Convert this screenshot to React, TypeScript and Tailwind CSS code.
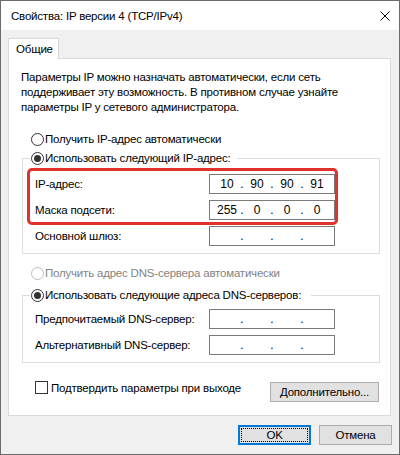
import React from "react";

function Radio({ checked = false, disabled = false }: { checked?: boolean; disabled?: boolean }) {
  return (
    <span
      className={
        "w-[13px] h-[13px] rounded-full border bg-white flex items-center justify-center shrink-0 " +
        (disabled ? "border-[#bcbcbc]" : "border-[#333333]")
      }
    >
      {checked ? <span className="w-[7px] h-[7px] rounded-full bg-[#333333]" /> : null}
    </span>
  );
}

function IpBox({ values }: { values?: string[] }) {
  const v = values ?? ["", "", "", ""];
  return (
    <div className="w-[126px] h-[20px] border border-[#7a7a7a] bg-white flex items-center pl-[5px] leading-[18px] tracking-normal text-[12px]">
      {v.map((x, i) => (
        <React.Fragment key={i}>
          <span className="w-[24px] text-center">{x}</span>
          {i < 3 ? <span className="w-[6px] text-center">.</span> : null}
        </React.Fragment>
      ))}
    </div>
  );
}

function Row({ label, values }: { label: string; values?: string[] }) {
  return (
    <div className="flex items-center h-[20px]">
      <span className="w-[174px] leading-[16px] whitespace-nowrap">{label}</span>
      <IpBox values={values} />
    </div>
  );
}

export default function App() {
  return (
    <div className="w-[400px] h-[455px] flex flex-col bg-[#f0f0f0] border border-[#6b6b6b] text-[11.5px] tracking-[-0.2px] text-black font-['Liberation_Sans',Arial,sans-serif]">
      <div className="h-[29px] bg-white flex items-center pl-[10px] shrink-0">
        <span className="leading-[16px]">Свойства: IP версии 4 (TCP/IPv4)</span>
        <svg className="ml-auto mr-[9px]" width="10" height="10" viewBox="0 0 10 10">
          <path d="M0.5 0.5 L9.5 9.5 M9.5 0.5 L0.5 9.5" stroke="#000" strokeWidth="1" fill="none" />
        </svg>
      </div>
      <div className="flex-1 flex flex-col pl-[7px] pr-[8px]">
        <div className="mt-[8px] w-[51px] h-[21px] border border-b-0 border-[#d9d9d9] bg-white -mb-px relative z-10 pl-[7px] flex items-center leading-[16px]">
          Общие
        </div>
        <div className="h-[358px] border border-[#d9d9d9] bg-white pl-[12px] pr-[11px] flex flex-col">
          <p className="mt-[11px] leading-[15px] whitespace-nowrap">
            Параметры IP можно назначать автоматически, если сеть
            <br />
            поддерживает эту возможность. В противном случае узнайте
            <br />
            параметры IP у сетевого администратора.
          </p>
          <label className="mt-[16px] ml-[10px] h-[16px] flex items-center gap-[1px] leading-[16px]">
            <Radio />
            <span>Получить IP-адрес автоматически</span>
          </label>
          <fieldset className="mt-[3px] ml-[1px] w-[358px] border border-[#dcdcdc] px-[4px] pb-[7px]">
            <legend className="ml-[3px] pl-[1px] pr-[6px]">
              <span className="h-[16px] flex items-center gap-[1px] leading-[16px]">
                <Radio checked />
                <span>Использовать следующий IP-адрес:</span>
              </span>
            </legend>
            <div className="mt-[2px] w-[311px] border-[3px] border-[#e0312b] rounded-[5px] pt-[3px] pb-[2px] pl-[5px] flex flex-col gap-[6px]">
              <Row label="IP-адрес:" values={["10", "90", "90", "91"]} />
              <Row label="Маска подсети:" values={["255", "0", "0", "0"]} />
            </div>
            <div className="mt-[1px] pl-[8px]">
              <Row label="Основной шлюз:" />
            </div>
          </fieldset>
          <label className="mt-[11px] ml-[10px] h-[16px] flex items-center gap-[1px] leading-[16px] text-[#838383]">
            <Radio disabled />
            <span>Получить адрес DNS-сервера автоматически</span>
          </label>
          <fieldset className="mt-[6px] ml-[1px] w-[358px] border border-[#dcdcdc] px-[4px] pb-[7px]">
            <legend className="ml-[3px] pl-[1px] pr-[10px]">
              <span className="h-[16px] flex items-center gap-[1px] leading-[16px]">
                <Radio checked />
                <span>Использовать следующие адреса DNS-серверов:</span>
              </span>
            </legend>
            <div className="mt-[6px] pl-[8px] flex flex-col gap-[6px]">
              <Row label="Предпочитаемый DNS-сервер:" />
              <Row label="Альтернативный DNS-сервер:" />
            </div>
          </fieldset>
          <div className="mt-[18px] flex items-start">
            <label className="ml-[14px] h-[13px] flex items-center gap-[3px] leading-[16px]">
              <span className="w-[13px] h-[13px] border border-[#333333] bg-white shrink-0" />
              <span>Подтвердить параметры при выходе</span>
            </label>
            <button className="ml-auto mt-[1px] w-[109px] h-[20px] bg-[#e1e1e1] border border-[#adadad] leading-[16px]">
              Дополнительно...
            </button>
          </div>
        </div>
        <div className="mt-[9px] mr-[-1px] flex justify-end gap-[8px]">
          <button className="w-[73px] h-[20px] bg-[#e1e1e1] border-2 border-[#0078d7] p-[1px]">
            <span className="w-full h-full border border-dotted border-black flex items-center justify-center leading-[14px]">
              OK
            </span>
          </button>
          <button className="w-[73px] h-[20px] bg-[#e1e1e1] border border-[#adadad] flex items-center justify-center leading-[16px]">
            Отмена
          </button>
        </div>
      </div>
    </div>
  );
}
